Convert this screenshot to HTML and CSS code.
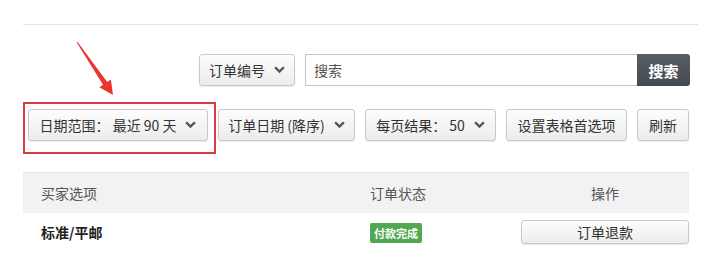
FILE: index.html
```html
<!DOCTYPE html>
<html lang="zh-CN">
<head>
    <meta charset="UTF-8">
    <meta name="viewport" content="width=device-width, initial-scale=1.0">
    <title>订单列表</title>
    <link rel="stylesheet" href="styles.css">
</head>
<body>
    <div class="pagina">
        <div class="linea"></div>

        <div class="filabusqueda">
            <button class="boton selector ancho-tipo">订单编号 <svg class="flecha" viewBox="0 0 10 7"><polyline points="1,1 5,5 9,1"/></svg></button>
            <input class="caja" type="text" placeholder="搜索">
            <button class="botonbuscar">搜索</button>
        </div>

        <div class="filafiltros">
            <button class="boton selector ancho-fecha">日期范围： 最近 90 天 <svg class="flecha" viewBox="0 0 10 7"><polyline points="1,1 5,5 9,1"/></svg></button>
            <button class="boton selector ancho-orden">订单日期 (降序) <svg class="flecha" viewBox="0 0 10 7"><polyline points="1,1 5,5 9,1"/></svg></button>
            <button class="boton selector ancho-pagina">每页结果： 50 <svg class="flecha" viewBox="0 0 10 7"><polyline points="1,1 5,5 9,1"/></svg></button>
            <button class="boton ancho-ajustes">设置表格首选项</button>
            <button class="boton ancho-refresh">刷新</button>
        </div>

        <div class="tabla">
            <div class="cabecera">
                <div class="col1">买家选项</div>
                <div class="col2">订单状态</div>
                <div class="col3 centro">操作</div>
            </div>
            <div class="fila">
                <div class="col1 negrita">标准/平邮</div>
                <div class="col2"><span class="etiqueta">付款完成</span></div>
                <div class="col3"><button class="boton reembolso">订单退款</button></div>
            </div>
        </div>

        <!-- marca roja de la captura -->
        <div class="marco"></div>
        <svg class="flechaRoja" viewBox="0 0 50 60" width="50" height="60">
            <polygon points="0.6,1.3 1.4,0.7 31.2,41 34.9,38.5 37,54 23.3,46.3 27,43.8" fill="#ea3430"/>
        </svg>
    </div>
</body>
</html>
```

FILE: styles.css
```css
* {
    box-sizing: border-box;
    padding: 0;
    margin: 0;
}

html,
body {
    width: 100%;
    height: 100%;
    background: #fff;
}

body {
    font-family: "Noto Sans CJK SC", "Liberation Sans", sans-serif;
    font-size: 14px;
    color: #333;
}

.pagina {
    position: relative;
    padding-top: 24px;
}

.linea {
    margin-left: 23px;
    width: 675px;
    height: 1px;
    background: #e3e3e3;
}

.filabusqueda {
    display: flex;
    margin-top: 29px;
    padding-left: 199px;
    height: 32px;
}

.boton {
    font-family: inherit;
    font-size: 14px;
    color: #333;
    height: 32px;
    border: 1px solid #c9c9c9;
    border-radius: 3px;
    background: linear-gradient(#fdfdfd, #ececec);
    box-shadow: 0 1px 1px rgba(0, 0, 0, 0.08);
    cursor: pointer;
    display: flex;
    align-items: center;
    justify-content: center;
    gap: 9px;
    white-space: nowrap;
}

.flecha {
    width: 11px;
    height: 8px;
    fill: none;
    stroke: #555;
    stroke-width: 2.2;
}

.ancho-tipo { width: 96px; }

.caja {
    margin-left: 10px;
    width: 332px;
    height: 32px;
    border: 1px solid #c4c4c4;
    border-right: none;
    padding-left: 8px;
    font-family: inherit;
    font-size: 14px;
    color: #333;
}

.caja::placeholder {
    color: #555;
}

.botonbuscar {
    width: 53px;
    height: 32px;
    border: none;
    border-radius: 0 3px 3px 0;
    background: linear-gradient(#5a5f66, #44494f);
    color: #fff;
    font-family: inherit;
    font-size: 15px;
    font-weight: bold;
}

.filafiltros {
    display: flex;
    gap: 10px;
    margin-top: 23px;
    padding-left: 28px;
}

.ancho-fecha { width: 180px; }
.ancho-orden { width: 137px; }
.ancho-pagina { width: 131px; }
.ancho-ajustes { width: 121px; }
.ancho-refresh { width: 52px; }

.tabla {
    margin-top: 31px;
    margin-left: 23px;
    width: 666px;
}

.cabecera,
.fila {
    display: grid;
    grid-template-columns: 347px 151px 168px;
    align-items: center;
}

.cabecera {
    height: 41px;
    background: #f2f2f2;
    border-top: 1px solid #e8e8e8;
    color: #555;
}

.fila {
    padding-top: 6px;
    height: 32px;
}

.col1 {
    padding-left: 18px;
}

.centro {
    text-align: center;
}

.negrita {
    font-weight: bold;
    color: #222;
}

.etiqueta {
    display: inline-block;
    background: #52a852;
    color: #fff;
    font-size: 11px;
    font-weight: bold;
    padding: 0 4px;
    height: 20px;
    line-height: 20px;
    border-radius: 2px;
}

.reembolso {
    width: 168px;
    height: 24px;
}

.marco {
    position: absolute;
    left: 23px;
    top: 102px;
    width: 193px;
    height: 52px;
    border: 2px solid #e0393f;
}

.flechaRoja {
    position: absolute;
    left: 76px;
    top: 41px;
}
```
